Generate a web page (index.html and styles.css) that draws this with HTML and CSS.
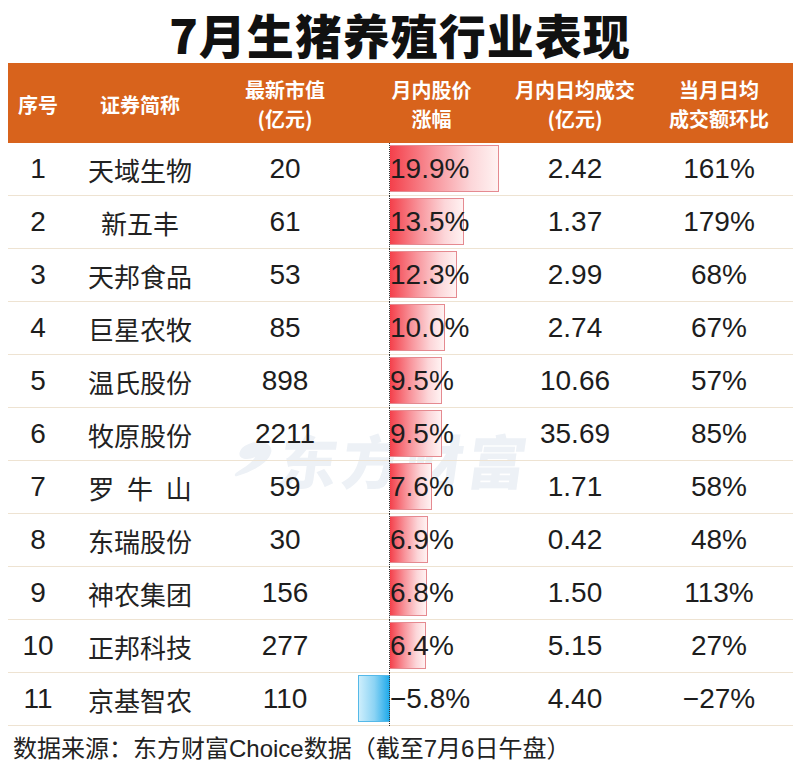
FILE: index.html
```html
<!DOCTYPE html>
<html lang="zh-CN">
<head>
<meta charset="utf-8">
<title>7月生猪养殖行业表现</title>
<link rel="stylesheet" href="styles.css">
</head>
<body>
<div class="page">
  <h1 class="title">7月生猪养殖行业表现</h1>
  <div class="table">
    <div class="thead">
      <div class="th">序号</div>
      <div class="th">证券简称</div>
      <div class="th">最新市值<br>(亿元)</div>
      <div class="th">月内股价<br>涨幅</div>
      <div class="th">月内日均成交<br>(亿元)</div>
      <div class="th">当月日均<br>成交额环比</div>
    </div>
    <div class="tbody">
      <div class="watermark" aria-hidden="true">
        <svg class="wm-icon" viewBox="0 0 40 40" width="38" height="38"><path d="M14 4 C26 -1 40 4 38 14 C36 24 24 32 6 38 C3 39 2 36 5 34 C14 28 20 23 22 18 C14 22 4 20 5 13 C6 8 9 6 14 4 Z" fill="currentColor"/></svg>
        <span>东方财富</span>
      </div>
      <div class="row"><div class="td num">1</div><div class="td name">天域生物</div><div class="td num">20</div><div class="td bar-cell"><span class="bar pos" style="width:109px"></span><span class="val">19.9%</span></div><div class="td num">2.42</div><div class="td num">161%</div></div>
      <div class="row"><div class="td num">2</div><div class="td name">新五丰</div><div class="td num">61</div><div class="td bar-cell"><span class="bar pos" style="width:74px"></span><span class="val">13.5%</span></div><div class="td num">1.37</div><div class="td num">179%</div></div>
      <div class="row"><div class="td num">3</div><div class="td name">天邦食品</div><div class="td num">53</div><div class="td bar-cell"><span class="bar pos" style="width:67px"></span><span class="val">12.3%</span></div><div class="td num">2.99</div><div class="td num">68%</div></div>
      <div class="row"><div class="td num">4</div><div class="td name">巨星农牧</div><div class="td num">85</div><div class="td bar-cell"><span class="bar pos" style="width:55px"></span><span class="val">10.0%</span></div><div class="td num">2.74</div><div class="td num">67%</div></div>
      <div class="row"><div class="td num">5</div><div class="td name">温氏股份</div><div class="td num">898</div><div class="td bar-cell"><span class="bar pos" style="width:52px"></span><span class="val">9.5%</span></div><div class="td num">10.66</div><div class="td num">57%</div></div>
      <div class="row"><div class="td num">6</div><div class="td name">牧原股份</div><div class="td num">2211</div><div class="td bar-cell"><span class="bar pos" style="width:52px"></span><span class="val">9.5%</span></div><div class="td num">35.69</div><div class="td num">85%</div></div>
      <div class="row"><div class="td num">7</div><div class="td name spaced">罗 牛 山</div><div class="td num">59</div><div class="td bar-cell"><span class="bar pos" style="width:42px"></span><span class="val">7.6%</span></div><div class="td num">1.71</div><div class="td num">58%</div></div>
      <div class="row"><div class="td num">8</div><div class="td name">东瑞股份</div><div class="td num">30</div><div class="td bar-cell"><span class="bar pos" style="width:38px"></span><span class="val">6.9%</span></div><div class="td num">0.42</div><div class="td num">48%</div></div>
      <div class="row"><div class="td num">9</div><div class="td name">神农集团</div><div class="td num">156</div><div class="td bar-cell"><span class="bar pos" style="width:37px"></span><span class="val">6.8%</span></div><div class="td num">1.50</div><div class="td num">113%</div></div>
      <div class="row"><div class="td num">10</div><div class="td name">正邦科技</div><div class="td num">277</div><div class="td bar-cell"><span class="bar pos" style="width:36px"></span><span class="val">6.4%</span></div><div class="td num">5.15</div><div class="td num">27%</div></div>
      <div class="row"><div class="td num">11</div><div class="td name">京基智农</div><div class="td num">110</div><div class="td bar-cell"><span class="bar neg" style="width:32px"></span><span class="val">−5.8%</span></div><div class="td num">4.40</div><div class="td num">−27%</div></div>
    </div>
  </div>
  <p class="footer">数据来源：东方财富Choice数据（截至7月6日午盘）</p>
</div>
</body>
</html>
```
FILE: styles.css
```css
* { box-sizing: border-box; }
html, body { margin: 0; padding: 0; background: #fff; }
body {
  width: 800px;
  height: 766px;
  overflow: hidden;
  font-family: "Liberation Sans", "Noto Sans CJK SC", sans-serif;
  color: #1d1d1d;
}
.page { width: 800px; }
.title {
  margin: 0 0 -5px 0;
  text-align: center;
  font-family: "Noto Sans CJK SC", sans-serif;
  font-weight: 900;
  font-size: 47px;
  line-height: 68px;
  letter-spacing: 1px;
  color: #111;
}
.table { margin-left: 8px; width: 785px; position: relative; }
.thead, .row {
  display: grid;
  grid-template-columns: 60px 144px 146px 147px 140px 148px;
}
.thead {
  height: 80px;
  background: #d8631c;
}
.th {
  display: flex;
  align-items: center;
  justify-content: center;
  text-align: center;
  color: #fff;
  font-family: "Noto Sans CJK SC", sans-serif;
  font-weight: 700;
  font-size: 20px;
  line-height: 29px;
  padding-top: 2px;
}
.tbody { position: relative; }
.watermark {
  position: absolute;
  left: 226px;
  top: 284px;
  display: flex;
  align-items: center;
  gap: 8px;
  color: #edf1f6;
  font-family: "Noto Sans CJK SC", sans-serif;
  font-weight: 900;
  font-size: 58px;
  line-height: 64px;
  letter-spacing: 5px;
  transform: skewX(-8deg);
  z-index: 0;
}
.wm-icon { display: block; }
.row {
  position: relative;
  height: 53px;
  border-bottom: 1px solid #eee3d2;
  z-index: 1;
}
.td {
  display: flex;
  align-items: center;
  justify-content: center;
  font-size: 28px;
}
.name {
  font-family: "Noto Sans CJK SC", sans-serif;
  font-size: 26px;
  color: #222;
}
.spaced { word-spacing: 7px; }
.bar-cell {
  position: relative;
  justify-content: flex-start;
  padding-left: 32px;
}
.bar-cell::before {
  content: "";
  position: absolute;
  left: 31px;
  top: 0;
  bottom: -1px;
  border-left: 1px dotted #333;
  z-index: 2;
}
.row:first-child .bar-cell::before { top: 2px; }
.bar {
  position: absolute;
  top: 2px;
  bottom: 3px;
  z-index: 1;
}
.bar.pos {
  left: 32px;
  background: linear-gradient(to right, #f4404b 0%, #f8949b 40%, #fcd6d9 75%, #fff2f2 100%);
  border: 1px solid #e58a90;
  border-left: none;
}
.bar.neg {
  left: 0;
  background: linear-gradient(to right, #cdeefc 0%, #8bd3f4 50%, #1aa8ea 100%);
  border: 1px solid #55b9e8;
  border-right: none;
}
.val {
  position: relative;
  z-index: 3;
}
.footer {
  margin: 0;
  height: 40px;
  padding-left: 13px;
  display: flex;
  align-items: center;
  font-family: "Liberation Sans", "Noto Sans CJK SC", sans-serif;
  font-size: 24px;
  color: #222;
}
```
